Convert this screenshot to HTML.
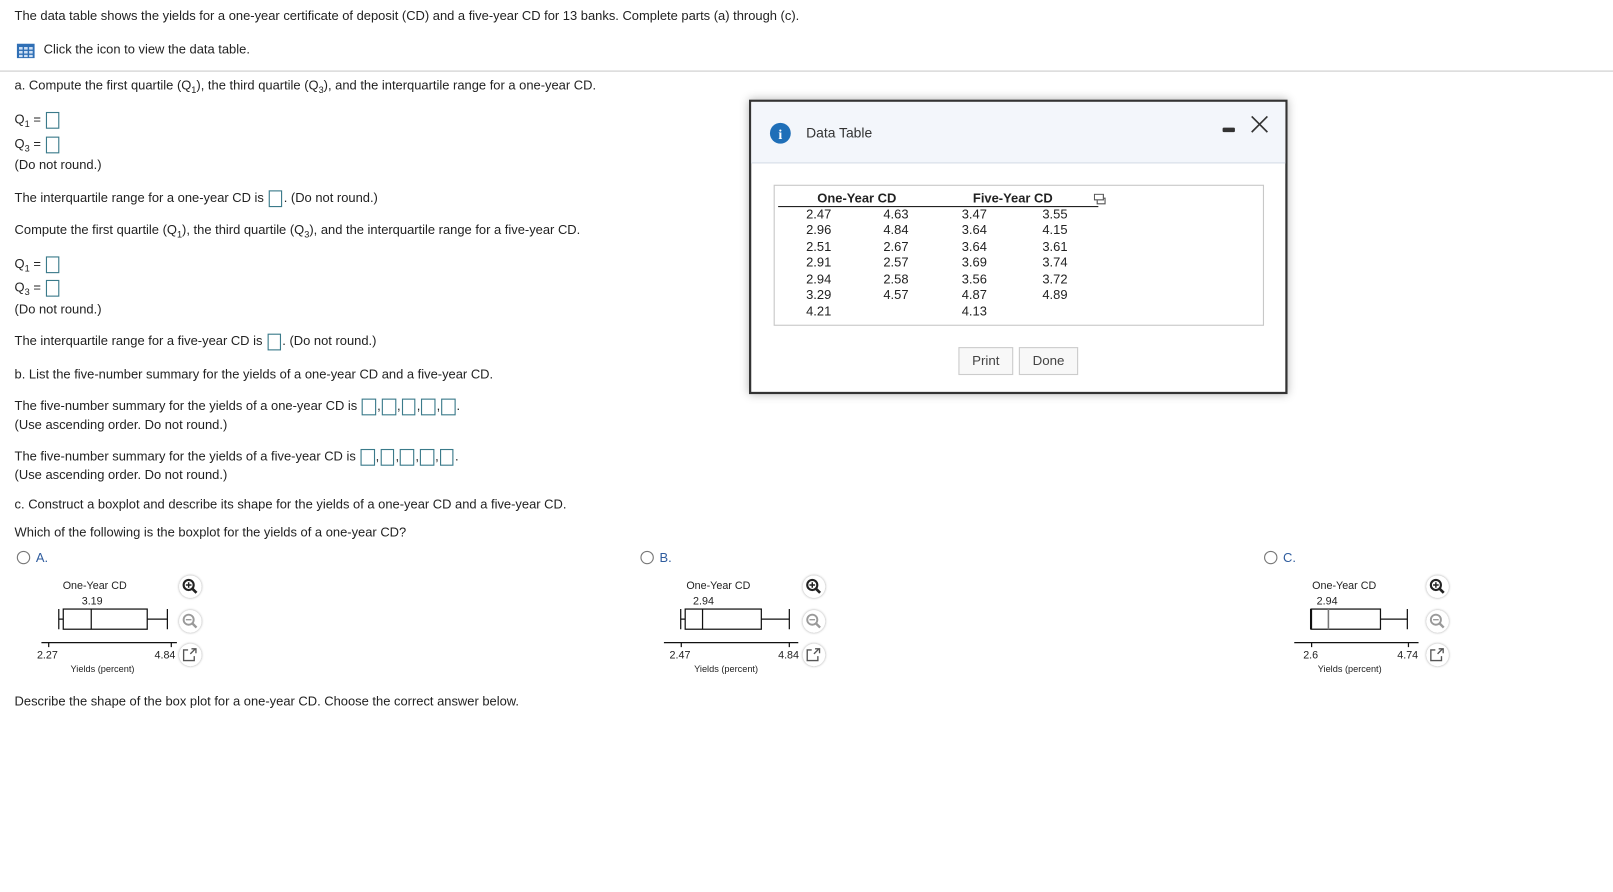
<!DOCTYPE html>
<html><head><meta charset="utf-8"><style>
body{margin:0;width:1613px;height:892px;background:#fff;overflow:hidden}
#w{position:absolute;left:0;top:0;width:1441px;height:797px;transform:scale(1.1196);transform-origin:0 0;font-family:"Liberation Sans",sans-serif;font-size:11.56px;color:#222}
.t{position:absolute;white-space:nowrap;line-height:14px}
.b{display:inline-block;width:12.5px;height:14.5px;border:1px solid #3a7a8a;vertical-align:middle;margin:0 1px;box-sizing:border-box}
sub{font-size:8.2px;vertical-align:-3px;line-height:0}
.radio{display:inline-block;width:10px;height:10px;border:1px solid #777;border-radius:50%;vertical-align:-2px;margin-right:5px}
</style></head><body><div id="w">
<div class="t" style="left:13px;top:8px">The data table shows the yields for a one-year certificate of deposit (CD) and a five-year CD for 13 banks. Complete parts (a) through (c).</div>
<svg style="position:absolute;left:15px;top:39px" width="16" height="13"><rect x="0" y="0" width="16" height="13" fill="#2f6fb5"/><g fill="#cfe0f5"><rect x="2" y="3" width="3.2" height="2.3"/><rect x="6.5" y="3" width="3.2" height="2.3"/><rect x="11" y="3" width="3.2" height="2.3"/><rect x="2" y="6.5" width="3.2" height="2.3"/><rect x="6.5" y="6.5" width="3.2" height="2.3"/><rect x="11" y="6.5" width="3.2" height="2.3"/><rect x="2" y="10" width="3.2" height="2"/><rect x="6.5" y="10" width="3.2" height="2"/><rect x="11" y="10" width="3.2" height="2"/></g></svg>
<div class="t" style="left:39px;top:38px">Click the icon to view the data table.</div>
<div style="position:absolute;left:0;top:63px;width:1441px;height:1px;background:#ccc"></div>
<div class="t" style="left:13px;top:70px">a. Compute the first quartile (Q<sub>1</sub>), the third quartile (Q<sub>3</sub>), and the interquartile range for a one-year CD.</div>
<div class="t" style="left:13px;top:100px">Q<sub>1</sub> = <span class="b"></span></div>
<div class="t" style="left:13px;top:122px">Q<sub>3</sub> = <span class="b"></span></div>
<div class="t" style="left:13px;top:141px">(Do not round.)</div>
<div class="t" style="left:13px;top:170px">The interquartile range for a one-year CD is <span class="b"></span>. (Do not round.)</div>
<div class="t" style="left:13px;top:199px">Compute the first quartile (Q<sub>1</sub>), the third quartile (Q<sub>3</sub>), and the interquartile range for a five-year CD.</div>
<div class="t" style="left:13px;top:229px">Q<sub>1</sub> = <span class="b"></span></div>
<div class="t" style="left:13px;top:250px">Q<sub>3</sub> = <span class="b"></span></div>
<div class="t" style="left:13px;top:270px">(Do not round.)</div>
<div class="t" style="left:13px;top:298px">The interquartile range for a five-year CD is <span class="b"></span>. (Do not round.)</div>
<div class="t" style="left:13px;top:328px">b. List the five-number summary for the yields of a one-year CD and a five-year CD.</div>
<div class="t" style="left:13px;top:356px">The five-number summary for the yields of a one-year CD is <span class="b"></span>,<span class="b"></span>,<span class="b"></span>,<span class="b"></span>,<span class="b"></span>.</div>
<div class="t" style="left:13px;top:373px">(Use ascending order. Do not round.)</div>
<div class="t" style="left:13px;top:401px">The five-number summary for the yields of a five-year CD is <span class="b"></span>,<span class="b"></span>,<span class="b"></span>,<span class="b"></span>,<span class="b"></span>.</div>
<div class="t" style="left:13px;top:418px">(Use ascending order. Do not round.)</div>
<div class="t" style="left:13px;top:444px">c. Construct a boxplot and describe its shape for the yields of a one-year CD and a five-year CD.</div>
<div class="t" style="left:13px;top:469px">Which of the following is the boxplot for the yields of a one-year CD?</div>
<div class="t" style="left:15px;top:492px;color:#2f5c9e"><span class="radio"></span>A.</div>
<div class="t" style="left:572px;top:492px;color:#2f5c9e"><span class="radio"></span>B.</div>
<div class="t" style="left:1129px;top:492px;color:#2f5c9e"><span class="radio"></span>C.</div>

<svg style="position:absolute;left:0;top:511px" width="1441" height="110" font-family="Liberation Sans" font-size="9.6" fill="#222">
<g stroke="#111" stroke-width="1.1" fill="none">
<line x1="52.5" y1="33" x2="52.5" y2="51"/><line x1="52.5" y1="42" x2="56.5" y2="42"/><rect x="56.5" y="33" width="75" height="18"/><line x1="81.5" y1="33" x2="81.5" y2="51"/><line x1="131.5" y1="42" x2="149.5" y2="42"/><line x1="149.5" y1="33" x2="149.5" y2="51"/>
<line x1="37" y1="63" x2="158" y2="63"/><line x1="43.5" y1="63" x2="43.5" y2="67"/><line x1="153" y1="63" x2="153" y2="67"/>
<line x1="608" y1="33" x2="608" y2="51"/><line x1="608" y1="42" x2="612" y2="42"/><rect x="612" y="33" width="68" height="18"/><line x1="627.5" y1="33" x2="627.5" y2="51"/><line x1="680" y1="42" x2="705" y2="42"/><line x1="705" y1="33" x2="705" y2="51"/>
<line x1="593" y1="63" x2="713" y2="63"/><line x1="608.5" y1="63" x2="608.5" y2="67"/><line x1="705" y1="63" x2="705" y2="67"/>
<rect x="1171" y="33" width="62" height="18"/><line x1="1233" y1="42" x2="1257" y2="42"/><line x1="1257" y1="33" x2="1257" y2="51"/>
<line x1="1156" y1="63" x2="1267" y2="63"/><line x1="1171.5" y1="63" x2="1171.5" y2="67"/><line x1="1258" y1="63" x2="1258" y2="67"/>
</g>
<line x1="1171" y1="33" x2="1171" y2="51" stroke="#111" stroke-width="1.9"/><line x1="1186.5" y1="33" x2="1186.5" y2="51" stroke="#777" stroke-width="1.4"/>
<text x="56" y="15">One-Year CD</text><text x="73" y="29">3.19</text><text x="33" y="77">2.27</text><text x="138" y="77">4.84</text><text x="63" y="89" font-size="8.2">Yields (percent)</text>
<text x="613" y="15">One-Year CD</text><text x="619" y="29">2.94</text><text x="598" y="77">2.47</text><text x="695" y="77">4.84</text><text x="620" y="89" font-size="8.2">Yields (percent)</text>
<text x="1172" y="15">One-Year CD</text><text x="1176" y="29">2.94</text><text x="1164" y="77">2.6</text><text x="1248" y="77">4.74</text><text x="1177" y="89" font-size="8.2">Yields (percent)</text>
</svg>
<svg style="position:absolute;left:0;top:511px" width="1441" height="110">
<defs><filter id="sh"><feDropShadow dx="0" dy="0" stdDeviation="1.2" flood-opacity=".4"/></filter></defs>
<g id="icA">
<circle cx="170" cy="13" r="10" fill="#fff" filter="url(#sh)"/><circle cx="168.5" cy="11.5" r="4.5" fill="none" stroke="#222" stroke-width="1.9"/><line x1="172" y1="15" x2="175.5" y2="18.5" stroke="#222" stroke-width="2.4"/><path d="M166 11.5h5M168.5 9v5" stroke="#222" stroke-width="1.3"/>
<circle cx="170" cy="44" r="10" fill="#fff" filter="url(#sh)"/><circle cx="168.5" cy="42.5" r="4.5" fill="none" stroke="#999" stroke-width="1.7"/><line x1="172" y1="46" x2="175.5" y2="49.5" stroke="#999" stroke-width="2.1"/><path d="M166 42.5h5" stroke="#999" stroke-width="1.3"/>
<circle cx="170" cy="74" r="10" fill="#fff" filter="url(#sh)"/><path d="M168 69.5h-4v9.5h9.5v-4" fill="none" stroke="#555" stroke-width="1.2"/><path d="M170 73l4.5-4.5M171 68.5h4v4" fill="none" stroke="#555" stroke-width="1.2"/>
</g>
<use href="#icA" x="557"/><use href="#icA" x="1114"/>
</svg>
<div class="t" style="left:13px;top:620px">Describe the shape of the box plot for a one-year CD. Choose the correct answer below.</div>

<div style="position:absolute;left:669px;top:89px;width:477px;height:259px;border:2px solid #333;background:#fff;box-shadow:0 0 8px rgba(0,0,0,.3)">
<div style="position:absolute;left:0;top:0;width:477px;height:54px;background:#f3f6fb;border-bottom:1px solid #d6dde8"></div>
<svg style="position:absolute;left:16px;top:18px" width="20" height="20"><circle cx="10" cy="10" r="9.3" fill="#1f6fb8"/><text x="10" y="15" text-anchor="middle" fill="#fff" font-family="Liberation Serif" font-weight="bold" font-size="12.5">i</text></svg>
<div class="t" style="left:49px;top:21px;font-size:12.4px;color:#333">Data Table</div>
<div style="position:absolute;left:421px;top:23px;width:11px;height:4px;background:#333;border-radius:1px"></div>
<svg style="position:absolute;left:446px;top:12px" width="16" height="16"><path d="M1 1L15 15M15 1L1 15" stroke="#333" stroke-width="1.5"/></svg>
<div style="position:absolute;left:20px;top:74px;width:436px;height:124px;border:1px solid #c8c8c8"></div>
<div class="t" style="left:59px;top:80px;font-weight:bold">One-Year CD</div>
<div class="t" style="left:198px;top:80px;font-weight:bold">Five-Year CD</div>
<div style="position:absolute;left:24px;top:93px;width:286px;height:1px;background:#222"></div>
<svg style="position:absolute;left:306px;top:82px" width="12" height="10"><rect x="0.5" y="0.5" width="8" height="5" fill="none" stroke="#555"/><path d="M3 6v3h7V4H9" fill="none" stroke="#555"/></svg>
<div class="t" style="left:49px;top:94px;line-height:14.45px">2.47<br>2.96<br>2.51<br>2.91<br>2.94<br>3.29<br>4.21</div>
<div class="t" style="left:118px;top:94px;line-height:14.45px">4.63<br>4.84<br>2.67<br>2.57<br>2.58<br>4.57</div>
<div class="t" style="left:188px;top:94px;line-height:14.45px">3.47<br>3.64<br>3.64<br>3.69<br>3.56<br>4.87<br>4.13</div>
<div class="t" style="left:260px;top:94px;line-height:14.45px">3.55<br>4.15<br>3.61<br>3.74<br>3.72<br>4.89</div>
<div style="position:absolute;left:185px;top:219px;width:49px;height:25px;border:1px solid #ccc;background:#f8f8f8;box-sizing:border-box;text-align:center;line-height:23px;font-size:11.9px;color:#444">Print</div>
<div style="position:absolute;left:239px;top:219px;width:53px;height:25px;border:1px solid #ccc;background:#f8f8f8;box-sizing:border-box;text-align:center;line-height:23px;font-size:11.9px;color:#444">Done</div>
</div>
</div></body></html>
